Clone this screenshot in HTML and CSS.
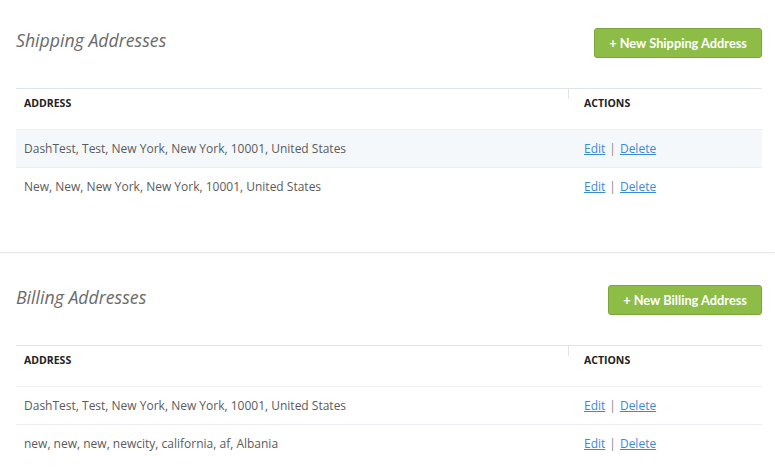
FILE: index.html
```html
<!DOCTYPE html>
<html lang="en">

<head>
    <meta charset="UTF-8">
    <meta name="viewport" content="width=device-width, initial-scale=1.0">
    <title>Addresses</title>
    <link rel="stylesheet" href="styles.css">
</head>

<body>
    <div class="section first">
        <div class="section-head">
            <h2>Shipping Addresses</h2>
            <button class="btn-new">+ New Shipping Address</button>
        </div>
        <table class="addr-table">
            <thead>
                <tr>
                    <th class="col-address">Address</th>
                    <th class="col-actions">Actions</th>
                </tr>
            </thead>
            <tbody>
                <tr class="row-hover">
                    <td>DashTest, Test, New York, New York, 10001, United States</td>
                    <td class="actions"><a href="#">Edit</a><span class="sep">|</span><a href="#">Delete</a></td>
                </tr>
                <tr>
                    <td>New, New, New York, New York, 10001, United States</td>
                    <td class="actions"><a href="#">Edit</a><span class="sep">|</span><a href="#">Delete</a></td>
                </tr>
            </tbody>
        </table>
    </div>

    <div class="section second">
        <div class="section-head">
            <h2>Billing Addresses</h2>
            <button class="btn-new">+ New Billing Address</button>
        </div>
        <table class="addr-table">
            <thead>
                <tr>
                    <th class="col-address">Address</th>
                    <th class="col-actions">Actions</th>
                </tr>
            </thead>
            <tbody>
                <tr>
                    <td>DashTest, Test, New York, New York, 10001, United States</td>
                    <td class="actions"><a href="#">Edit</a><span class="sep">|</span><a href="#">Delete</a></td>
                </tr>
                <tr>
                    <td>new, new, new, newcity, california, af, Albania</td>
                    <td class="actions"><a href="#">Edit</a><span class="sep">|</span><a href="#">Delete</a></td>
                </tr>
            </tbody>
        </table>
    </div>
</body>

</html>
```

FILE: styles.css
```css
body {
    font-family: "Open Sans", Arial, sans-serif;
    font-size: 12px;
    color: #5b5b5b;
    background-color: #FFFFFF;
    margin: 0;
    padding: 0;
}

.section {
    padding: 0 13px 0 16px;
}

.section.first {
    padding-top: 28px;
    padding-bottom: 47px;
    border-bottom: 1px solid #e8e9ea;
    box-shadow: 0 2px 3px rgba(0, 0, 0, 0.025);
}

.section.second {
    padding-top: 32px;
}

.section-head {
    display: flex;
    justify-content: space-between;
    align-items: center;
    height: 29px;
    margin-bottom: 31px;
}

h2 {
    margin: 0;
    padding-bottom: 5px;
    font-size: 17.7px;
    font-style: italic;
    font-weight: 400;
    color: #6a6a6a;
}

.btn-new {
    height: 30px;
    padding: 0 14px;
    font-family: Lato, Arial, sans-serif;
    font-size: 12.8px;
    font-weight: 700;
    color: #FFFFFF;
    background-color: #8dbd47;
    border: 1px solid #7ba63c;
    border-radius: 3px;
    cursor: pointer;
}

.addr-table {
    width: 100%;
    border-collapse: collapse;
}

.addr-table th {
    position: relative;
    height: 41px;
    padding: 7px 8px 0;
    border-top: 1px solid #dfe4ea;
    text-align: left;
    vertical-align: top;
    font-size: 10.5px;
    font-weight: 700;
    text-transform: uppercase;
    color: #222;
    box-sizing: border-box;
}

.addr-table th.col-address {
    width: 552px;
}

.addr-table th.col-actions {
    padding-left: 16px;
}

.addr-table th.col-actions::before {
    content: "";
    position: absolute;
    left: 0;
    top: 0;
    width: 1px;
    height: 10px;
    background-color: #dfe4ea;
}

.addr-table td {
    height: 37px;
    padding: 0 8px;
    border-top: 1px solid #ebeef2;
    vertical-align: middle;
}

.addr-table td.actions {
    padding-left: 16px;
}

.row-hover td {
    background-color: #f4f8fb;
}

.actions a {
    color: #3b8ad6;
    text-decoration: underline;
}

.actions .sep {
    margin: 0 4px;
    color: #888;
}
```
